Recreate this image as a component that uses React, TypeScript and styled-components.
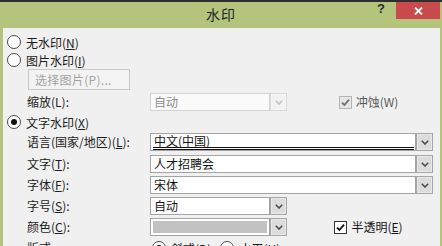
import React from 'react';
import styled, { createGlobalStyle } from 'styled-components';

const Global = createGlobalStyle`
  html, body { margin: 0; padding: 0; width: 442px; height: 246px; overflow: hidden; background: #b4c47d; }
  body { font-family: "Noto Sans CJK SC", "Noto Sans", sans-serif; font-size: 12px; color: #1c1c1c; }
  #root { width: 442px; height: 246px; }
`;

const Window = styled.div`
  width: 442px;
  height: 246px;
  display: flex;
  flex-direction: column;
  background: #b4c47d;
  overflow: hidden;
`;

const TitleBar = styled.div`
  flex: 0 0 26px;
  border-top: 2px solid #2e2e2e;
  display: grid;
  grid-template-columns: 1fr auto 1fr;
  align-items: start;
`;

const Title = styled.div`
  grid-column: 2;
  font-size: 14px;
  line-height: 24px;
  color: #222;
  letter-spacing: 1px;
`;

const Controls = styled.div`
  grid-column: 3;
  justify-self: end;
  display: flex;
  align-items: flex-start;
`;

const Help = styled.span`
  font: bold 13px/14px "Liberation Sans", sans-serif;
  color: #2a2a2a;
  margin-right: 11px;
`;

const Close = styled.div`
  width: 44px;
  height: 17px;
  margin-right: 2px;
  background: #c84a4c;
  color: #fff;
  display: flex;
  align-items: center;
  justify-content: center;
`;

const Body = styled.div`
  flex: 1;
  margin: 0 2px 0 3px;
  background: #f0f0f0;
  padding: 5px 0 0 4px;
  display: flex;
  flex-direction: column;
`;

const RadioRow = styled.label<{ $indent?: number }>`
  height: 18px;
  display: flex;
  align-items: center;
  gap: 5px;
  margin-left: ${p => p.$indent ?? 0}px;
  white-space: nowrap;
`;

const RadioCircle = styled.span<{ $on?: boolean }>`
  width: 12px;
  height: 12px;
  border: 1px solid #4a4a4a;
  border-radius: 50%;
  background: #fff;
  display: flex;
  align-items: center;
  justify-content: center;
  flex: none;
  &::after {
    content: "";
    width: 6px;
    height: 6px;
    border-radius: 50%;
    background: ${p => (p.$on ? '#111' : 'transparent')};
  }
`;

const ButtonRow = styled.div`
  height: 22px;
  display: flex;
  align-items: flex-start;
  padding-left: 21px;
`;

const PushButton = styled.div`
  width: 94px;
  height: 19px;
  border: 1px solid #c9c9c9;
  background: #f3f3f3;
  color: #a3a3a3;
  display: flex;
  align-items: center;
  padding-left: 6px;
  letter-spacing: 0.3px;
  box-sizing: content-box;
`;

const FieldRow = styled.div<{ $h: number; $pt?: number }>`
  height: ${p => p.$h}px;
  display: grid;
  grid-template-columns: 123px auto auto;
  align-items: start;
  padding-top: ${p => p.$pt ?? 2}px;
  box-sizing: border-box;
  margin-left: 20px;
  white-space: nowrap;
`;

const Label = styled.span`
  line-height: 18px;
`;

const Combo = styled.div<{ $w: number }>`
  width: ${p => p.$w}px;
  height: 18px;
  display: flex;
`;

const Field = styled.div<{ $disabled?: boolean }>`
  flex: 1;
  border: 1px solid ${p => (p.$disabled ? '#d2d2d2' : '#a4a4a4')};
  background: ${p => (p.$disabled ? '#fafafa' : '#fff')};
  color: ${p => (p.$disabled ? '#8c8c8c' : '#151515')};
  padding-left: 3px;
  line-height: 16px;
  display: flex;
  flex-direction: column;
`;

const LangValue = styled.span`
  line-height: 12px;
  margin: 1px 1px 0 -1px;
  padding-left: 1px;
  border-bottom: 3px double #111;
`;

const ColorSwatch = styled.span`
  flex: 1;
  margin: 2px 2px 2px -1px;
  background: #c2c2c2;
`;

const DropButton = styled.div<{ $disabled?: boolean }>`
  width: 15px;
  border: 1px solid ${p => (p.$disabled ? '#d6d6d6' : '#a6a6a6')};
  background: ${p => (p.$disabled ? '#f2f2f2' : '#dcdcdc')};
  box-shadow: inset 0 0 0 1px ${p => (p.$disabled ? '#f7f7f7' : '#e8e8e8')};
  display: flex;
  align-items: center;
  justify-content: center;
  color: ${p => (p.$disabled ? '#c4c4c4' : '#4c4c4c')};
`;

const CheckRow = styled.span<{ $disabled?: boolean }>`
  display: flex;
  align-items: center;
  gap: 4px;
  margin-left: 10px;
  line-height: 18px;
  color: ${p => (p.$disabled ? '#5a5a5a' : '#151515')};
`;

const CheckBox = styled.span<{ $disabled?: boolean }>`
  width: 11px;
  height: 11px;
  border: 1px solid ${p => (p.$disabled ? '#b5b5b5' : '#333')};
  background: ${p => (p.$disabled ? '#e6e6e6' : '#fff')};
  display: flex;
  align-items: center;
  justify-content: center;
  color: ${p => (p.$disabled ? '#707070' : '#111')};
`;

const RadioGroup = styled.div`
  display: flex;
  gap: 9px;
  padding-left: 2px;
`;

const Chevron = () => (
  <svg width="8" height="5" viewBox="0 0 8 5">
    <path d="M0.8 0.8 L4 4 L7.2 0.8" fill="none" stroke="currentColor" strokeWidth="1.6" />
  </svg>
);

const Check = () => (
  <svg width="9" height="9" viewBox="0 0 9 9">
    <path d="M1 4.6 L3.4 7 L8 1.6" fill="none" stroke="currentColor" strokeWidth="1.8" />
  </svg>
);

const CloseGlyph = () => (
  <svg width="9" height="8" viewBox="0 0 9 8">
    <path d="M1 0.5 L8 7.5 M8 0.5 L1 7.5" stroke="#fff" strokeWidth="1.8" />
  </svg>
);

const Radio = ({ on, children, indent }: { on?: boolean; children: React.ReactNode; indent?: number }) => (
  <RadioRow $indent={indent}>
    <RadioCircle $on={on} />
    <span>{children}</span>
  </RadioRow>
);

const Checked = ({ disabled, children }: { disabled?: boolean; children: React.ReactNode }) => (
  <CheckRow $disabled={disabled}>
    <CheckBox $disabled={disabled}>
      <Check />
    </CheckBox>
    <span>{children}</span>
  </CheckRow>
);

export default function App() {
  return (
    <>
      <Global />
      <Window>
        <TitleBar>
          <Title>水印</Title>
          <Controls>
            <Help>?</Help>
            <Close>
              <CloseGlyph />
            </Close>
          </Controls>
        </TitleBar>
        <Body>
          <Radio>无水印(<u>N</u>)</Radio>
          <Radio>图片水印(<u>I</u>)</Radio>
          <ButtonRow>
            <PushButton>选择图片(P)...</PushButton>
          </ButtonRow>
          <FieldRow $h={22} $pt={2}>
            <Label>缩放(L):</Label>
            <Combo $w={137}>
              <Field $disabled>自动</Field>
              <DropButton $disabled>
                <Chevron />
              </DropButton>
            </Combo>
            <Checked disabled>冲蚀(W)</Checked>
          </FieldRow>
          <Radio on>文字水印(<u>X</u>)</Radio>
          <FieldRow $h={22}>
            <Label>语言(国家/地区)(<u>L</u>):</Label>
            <Combo $w={283}>
              <Field>
                <LangValue>中文(中国)</LangValue>
              </Field>
              <DropButton>
                <Chevron />
              </DropButton>
            </Combo>
          </FieldRow>
          <FieldRow $h={21}>
            <Label>文字(<u>T</u>):</Label>
            <Combo $w={283}>
              <Field>人才招聘会</Field>
              <DropButton>
                <Chevron />
              </DropButton>
            </Combo>
          </FieldRow>
          <FieldRow $h={21}>
            <Label>字体(<u>F</u>):</Label>
            <Combo $w={283}>
              <Field>宋体</Field>
              <DropButton>
                <Chevron />
              </DropButton>
            </Combo>
          </FieldRow>
          <FieldRow $h={21}>
            <Label>字号(<u>S</u>):</Label>
            <Combo $w={137}>
              <Field>自动</Field>
              <DropButton>
                <Chevron />
              </DropButton>
            </Combo>
          </FieldRow>
          <FieldRow $h={21}>
            <Label>颜色(<u>C</u>):</Label>
            <Combo $w={137}>
              <Field>
                <ColorSwatch />
              </Field>
              <DropButton>
                <Chevron />
              </DropButton>
            </Combo>
            <Checked>半透明(<u>E</u>)</Checked>
          </FieldRow>
          <FieldRow $h={21}>
            <Label>版式:</Label>
            <RadioGroup>
              <Radio on>斜式(<u>D</u>)</Radio>
              <Radio>水平(<u>H</u>)</Radio>
            </RadioGroup>
          </FieldRow>
        </Body>
      </Window>
    </>
  );
}
